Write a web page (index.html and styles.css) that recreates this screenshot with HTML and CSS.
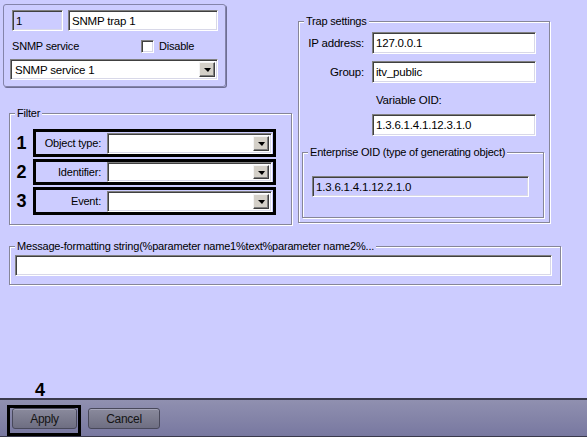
FILE: index.html
```html
<!DOCTYPE html>
<html>
<head>
<meta charset="utf-8">
<link rel="stylesheet" href="styles.css">
</head>
<body>
<div class="dialog">
  <div class="main">
    <div class="top">
      <div class="left">
        <div class="ident">
          <div class="row1">
            <div class="field disabled idf">1</div>
            <div class="field namef">SNMP trap 1</div>
          </div>
          <div class="row2">
            <span class="svc-lbl">SNMP service</span>
            <span class="check"><span class="cbox"></span>Disable</span>
          </div>
          <div class="combo service"><span class="val">SNMP service 1</span><span class="drop"></span></div>
        </div>
        <fieldset class="group filter">
          <legend>Filter</legend>
          <div class="frow"><span class="num">1</span>
            <div class="hl h1"><span class="flabel">Object type:</span><div class="combo fcombo"><span class="val"></span><span class="drop"></span></div></div>
          </div>
          <div class="frow"><span class="num">2</span>
            <div class="hl h2"><span class="flabel">Identifier:</span><div class="combo fcombo c2"><span class="val"></span><span class="drop"></span></div></div>
          </div>
          <div class="frow"><span class="num">3</span>
            <div class="hl h3"><span class="flabel">Event:</span><div class="combo fcombo"><span class="val"></span><span class="drop"></span></div></div>
          </div>
        </fieldset>
      </div>
      <fieldset class="group trap">
        <legend>Trap settings</legend>
        <div class="tgrid">
          <span class="tlabel">IP address:</span>
          <div class="field tin">127.0.0.1</div>
          <span class="tlabel">Group:</span>
          <div class="field tin">itv_public</div>
        </div>
        <div class="varlabel">Variable OID:</div>
        <div class="field tin varin">1.3.6.1.4.1.12.3.1.0</div>
        <fieldset class="group ent">
          <legend>Enterprise OID (type of generating object)</legend>
          <div class="field disabled entin">1.3.6.1.4.1.12.2.1.0</div>
        </fieldset>
      </fieldset>
    </div>
    <fieldset class="group msg">
      <legend>Message-formatting string(%parameter name1%text%parameter name2%...</legend>
      <div class="field msgin"></div>
    </fieldset>
    <div class="note4">4</div>
  </div>
  <div class="bar">
    <div class="hl4"><button class="btn apply">Apply</button></div>
    <button class="btn cancel">Cancel</button>
  </div>
</div>
</body>
</html>
```

FILE: styles.css
```css
* { box-sizing: border-box; }
html, body { margin: 0; padding: 0; }
body {
  background: #ccccff;
  font: 11px "Liberation Sans", Arial, sans-serif;
  color: #000;
  overflow: hidden;
}
.dialog { width: 587px; height: 437px; display: flex; flex-direction: column; }
.main { height: 398px; display: flex; flex-direction: column; }
.top { display: flex; align-items: flex-start; }
.left { width: 292px; flex: none; }

/* generic sunken field */
.field {
  display: flex;
  align-items: center;
  padding-left: 3px;
  background: #fff;
  border: 1px solid;
  border-color: #808080 #ffffff #ffffff #808080;
  box-shadow: inset 1px 1px 0 #404040, inset -1px -1px 0 #d8d8e8;
  white-space: nowrap;
  overflow: hidden;
  letter-spacing: -0.2px;
}
.field.disabled { background: #ccccff; }

.combo {
  display: flex;
  align-items: center;
  background: #fff;
  border: 1px solid;
  border-color: #808080 #ffffff #ffffff #808080;
  box-shadow: inset 1px 1px 0 #404040, inset -1px -1px 0 #d8d8e8;
  padding: 2px 2px 2px 4px;
}
.combo .val { flex: 1; white-space: nowrap; letter-spacing: -0.2px; }
.drop {
  width: 16px;
  height: 100%;
  flex: none;
  background: #d4d0c8;
  border: 1px solid;
  border-color: #f4f4f4 #404040 #404040 #f4f4f4;
  box-shadow: inset -1px -1px 0 #808080;
  display: flex;
  align-items: center;
  justify-content: center;
}
.drop::after {
  content: "";
  border-top: 4px solid #000;
  border-left: 4px solid transparent;
  border-right: 3px solid transparent;
  margin-top: 1px;
}

/* identity panel */
.ident {
  margin: 4px 0 0 3px;
  width: 223px;
  height: 83px;
  border: 1px solid #8484aa;
  border-radius: 3px;
  box-shadow: 1px 1px 0 #6e6e94;
  padding: 5px 0 0 0;
}
.row1 { display: flex; height: 21px; }
.idf { margin-left: 8px; width: 51px; height: 21px; font-size: 11.5px; }
.namef { margin-left: 5px; width: 150px; height: 21px; font-size: 11.5px; }
.row2 { display: flex; align-items: center; height: 28px; padding-top: 2px; }
.svc-lbl { width: 137px; padding-left: 8px; letter-spacing: -0.2px; }
.check { display: flex; align-items: center; letter-spacing: -0.2px; }
.cbox {
  width: 13px; height: 13px;
  background: #fff;
  border: 1px solid;
  border-color: #808080 #ffffff #ffffff #808080;
  box-shadow: inset 1px 1px 0 #404040, inset -1px -1px 0 #d8d8e8;
  margin-right: 5px;
}
.service { margin-left: 6px; width: 208px; height: 21px; font-size: 11.5px; }

/* group boxes */
.group {
  margin: 0;
  padding: 0;
  min-width: 0;
  border: 1px solid #868698;
  box-shadow: inset 1px 1px 0 #ffffff, 1px 1px 0 #ffffff;
}
.group > legend {
  margin-left: 5px;
  padding: 0 2px;
  line-height: 13px;
  height: 13px;
  white-space: nowrap;
  letter-spacing: -0.2px;
  background: #ccccff;
}

.filter { margin: 20px 0 0 9px; width: 283px; padding: 9px 0 9px 0; }
.frow { display: flex; align-items: center; margin-bottom: 2px; }
.frow:last-child { margin-bottom: 0; }
.num { width: 23px; text-align: center; font-weight: bold; font-size: 18px; line-height: 18px; }
.hl { width: 243px; border: 3px solid #000; display: flex; align-items: center; }
.h1, .h3 { height: 28px; }
.h2 { height: 26px; }
.flabel { width: 66px; text-align: right; padding-right: 1px; letter-spacing: -0.2px; }
.fcombo { margin-left: 5px; width: 165px; height: 21px; }
.fcombo.c2 { height: 20px; }

.trap { margin: 15px 0 0 6px; width: 252px; height: 208px; padding: 4px 0 4px 0; }
.tgrid {
  display: grid;
  grid-template-columns: 65px 164px;
  column-gap: 8px;
  row-gap: 7px;
  align-items: center;
}
.tlabel { text-align: right; letter-spacing: -0.2px; font-size: 11.5px; }
.tin { height: 22px; font-size: 11.5px; }
.varlabel { margin: 11px 0 0 77px; line-height: 13px; letter-spacing: -0.2px; font-size: 11.5px; }
.varin { margin: 7px 0 0 73px; width: 164px; }
.ent { margin: 10px 0 0 3px; width: 242px; height: 72px; padding: 17px 0 0 0; }
.entin { margin-left: 9px; width: 217px; height: 21px; font-size: 11.5px; }

.msg { margin: 15px 0 0 9px; width: 552px; height: 45px; padding: 2px 0 0 0; }
.msgin { margin-left: 5px; width: 537px; height: 21px; }

.note4 {
  margin-top: auto;
  padding-left: 35px;
  font-weight: bold;
  font-size: 18px;
  line-height: 15px;
}

/* bottom bar */
.bar {
  height: 39px;
  border-top: 2px solid #3a3a4c;
  border-bottom: 1px solid #3a3a4c;
  background: linear-gradient(#9090b0, #7878a0);
  display: flex;
  align-items: flex-start;
  padding-top: 5px;
}
.hl4 {
  margin-left: 7px;
  width: 74px;
  height: 31px;
  border: 3px solid #000;
  padding-left: 2px;
}
.btn {
  height: 21px;
  margin: 0;
  padding: 0;
  border: 1px solid #48485a;
  border-radius: 3px;
  background: linear-gradient(#8a8a9c, #6e6e82);
  box-shadow: inset 0 1px 0 #a4a4b8;
  font: 12px "Liberation Sans", Arial, sans-serif;
  letter-spacing: -0.3px;
  color: #141414;
}
.apply { width: 65px; }
.cancel { width: 72px; margin: 3px 0 0 7px; }
```
